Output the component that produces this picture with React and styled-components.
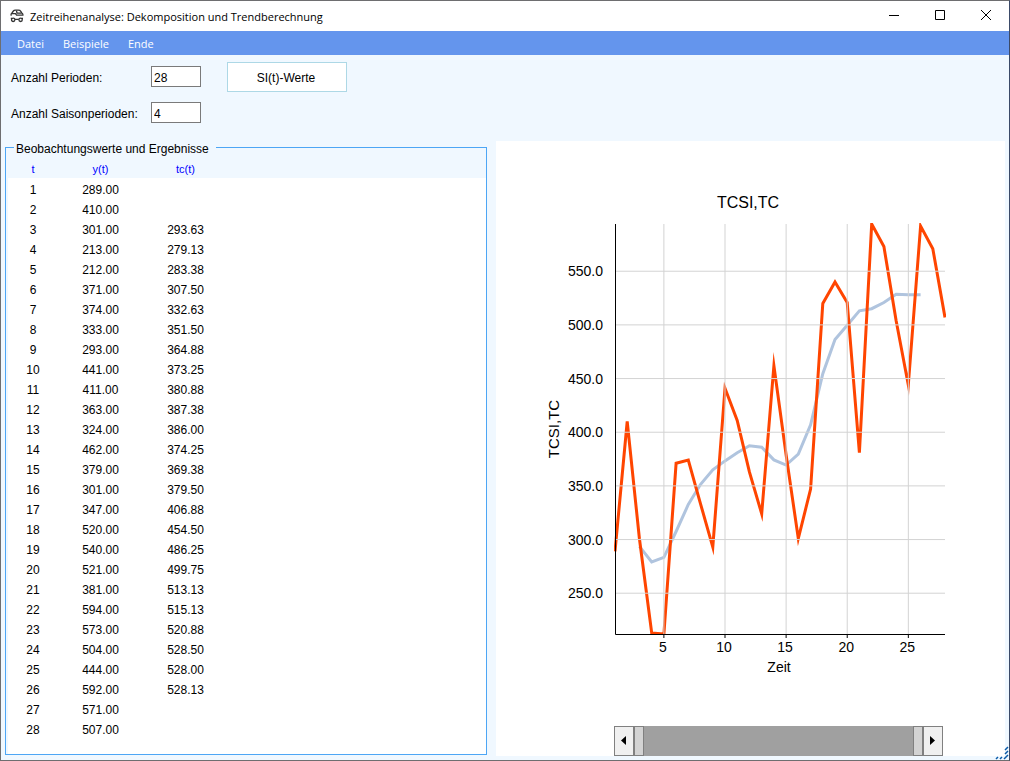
import React, { useState } from "react";
import styled, { createGlobalStyle } from "styled-components";

const observed = [
  289, 410, 301, 213, 212, 371, 374, 333, 293, 441, 411, 363, 324, 462, 379,
  301, 347, 520, 540, 521, 381, 594, 573, 504, 444, 592, 571, 507,
];

// the trend starts at t = 3 and ends at t = 26
const trend = [
  293.63, 279.13, 283.38, 307.5, 332.63, 351.5, 364.88, 373.25, 380.88, 387.38,
  386, 374.25, 369.38, 379.5, 406.88, 454.5, 486.25, 499.75, 513.13, 515.13,
  520.88, 528.5, 528, 528.13,
];

const rows = observed.map((y, i) => ({
  t: i + 1,
  y,
  tc: trend[i - 2],
}));

const plot = { left: 119, right: 449, top: 83, bottom: 493 };
const xPos = (t) => plot.left + ((t - 1) * (plot.right - plot.left)) / 27;
const yPos = (v) =>
  plot.bottom - ((v - 212) * (plot.bottom - plot.top)) / (594 - 212);
const toPoints = (list) =>
  list.map((p) => `${xPos(p.t).toFixed(1)},${yPos(p.v).toFixed(1)}`).join(" ");

const AppIcon = () => (
  <Logo viewBox="0 0 14 14" aria-hidden="true">
    <path d="M1.4 6.6Q0.6 5 1.8 4.2L3.4 2Q4 1.2 5.4 1.2H8.4Q10 1.2 10.8 2.4L12 4.4Q13.4 5 12.6 6.8" />
    <path d="M1.8 4.6H5.4L6.6 6.2H12.4M6.4 1.6L7 4L11 4.2" />
    <circle cx="3.2" cy="10.8" r="1.7" />
    <circle cx="10.6" cy="10.8" r="1.7" />
    <path d="M5 10.4H8.8M0.8 9.4H2M11.8 9.4H13" />
  </Logo>
);

const Chart = () => (
  <Plot viewBox="0 0 509 585" role="img" aria-label="TCSI,TC">
    <clipPath id="plotArea">
      <rect x="118" y="82" width="332" height="412" />
    </clipPath>
    <ChartTitle x="252" y="67">
      TCSI,TC
    </ChartTitle>
    <g clipPath="url(#plotArea)">
      <Line
        color="lightsteelblue"
        points={toPoints(
          rows.filter((r) => r.tc).map((r) => ({ t: r.t, v: r.tc }))
        )}
      />
      <Line
        color="orangered"
        points={toPoints(rows.map((r) => ({ t: r.t, v: r.y })))}
      />
    </g>
    {[250, 300, 350, 400, 450, 500, 550].map((v) => (
      <g key={v}>
        <GridLine x1={plot.left} x2={plot.right} y1={yPos(v)} y2={yPos(v)} />
        <AxisText x="107" y={yPos(v) + 5} anchor="end">
          {v.toFixed(1)}
        </AxisText>
      </g>
    ))}
    {[5, 10, 15, 20, 25].map((t) => (
      <g key={t}>
        <GridLine x1={xPos(t)} x2={xPos(t)} y1={plot.top} y2={plot.bottom} />
        <Axis d={`M${xPos(t)} 493v4`} />
        <AxisText x={xPos(t) - 1} y="511">
          {t}
        </AxisText>
      </g>
    ))}
    <Axis d="M119.5 83V493.5H449" />
    <AxisText x="283" y="531">
      Zeit
    </AxisText>
    <SideText transform="translate(63 288) rotate(-90)">TCSI,TC</SideText>
  </Plot>
);

const App = () => {
  const [periods, setPeriods] = useState("28");
  const [season, setSeason] = useState("4");

  return (
    <Window>
      <GlobalStyle />
      <TitleBar>
        <AppIcon />
        <WindowTitle>
          Zeitreihenanalyse: Dekomposition und Trendberechnung
        </WindowTitle>
        <WindowButton aria-label="Minimieren">
          <Glyph viewBox="0 0 12 12">
            <path d="M1 5.5H11" />
          </Glyph>
        </WindowButton>
        <WindowButton aria-label="Maximieren">
          <Glyph viewBox="0 0 12 12">
            <path d="M1.5 0.5H10.5V9.5H1.5Z" />
          </Glyph>
        </WindowButton>
        <WindowButton aria-label="Schließen">
          <Glyph viewBox="0 0 12 12">
            <path d="M1 0L11 10M11 0L1 10" />
          </Glyph>
        </WindowButton>
      </TitleBar>
      <MenuBar>
        <MenuItem>Datei</MenuItem>
        <MenuItem>Beispiele</MenuItem>
        <MenuItem>Ende</MenuItem>
      </MenuBar>
      <Settings onSubmit={(e) => e.preventDefault()}>
        <Label htmlFor="periods">Anzahl Perioden:</Label>
        <Input
          id="periods"
          value={periods}
          onChange={(e) => setPeriods(e.target.value)}
        />
        <ValuesButton type="submit">SI(t)-Werte</ValuesButton>
        <Label htmlFor="season">Anzahl Saisonperioden:</Label>
        <Input
          id="season"
          value={season}
          onChange={(e) => setSeason(e.target.value)}
        />
      </Settings>
      <Workspace>
        <Group>
          <Legend>Beobachtungswerte und Ergebnisse</Legend>
          <TableArea>
            <Table>
              <colgroup>
                <Col width="50px" />
                <Col width="85px" />
                <Col width="85px" />
                <Col />
              </colgroup>
              <thead>
                <tr>
                  <HeadCell>t</HeadCell>
                  <HeadCell>y(t)</HeadCell>
                  <HeadCell>tc(t)</HeadCell>
                  <HeadCell as="td" />
                </tr>
              </thead>
              <tbody>
                {rows.map((r) => (
                  <tr key={r.t}>
                    <Cell>{r.t}</Cell>
                    <Cell>{r.y.toFixed(2)}</Cell>
                    <Cell>{r.tc ? r.tc.toFixed(2) : ""}</Cell>
                    <Cell />
                  </tr>
                ))}
              </tbody>
            </Table>
          </TableArea>
        </Group>
        <ChartPanel>
          <Chart />
          <ScrollBar>
            <ScrollButton aria-label="Zurück">
              <Arrow viewBox="0 0 5 9">
                <path d="M5 0V9L0 4.5Z" />
              </Arrow>
            </ScrollButton>
            <Handle aria-label="Anfang" />
            <Track />
            <Handle aria-label="Ende des Bereichs" />
            <ScrollButton aria-label="Weiter">
              <Arrow viewBox="0 0 5 9">
                <path d="M0 0V9L5 4.5Z" />
              </Arrow>
            </ScrollButton>
          </ScrollBar>
        </ChartPanel>
      </Workspace>
      <Grip viewBox="0 0 14 14" aria-hidden="true">
        <path d="M1 13L3 11M5 13L7 11M9 13L13 9M10 8L13 5M10 4L13 1" />
      </Grip>
    </Window>
  );
};

const GlobalStyle = createGlobalStyle`
  * {
    box-sizing: border-box;
  }
  body {
    margin: 0;
    font-family: "Liberation Sans", Arial, sans-serif;
    font-size: 12px;
    color: #000;
  }
  button,
  input {
    font: inherit;
    color: inherit;
  }
`;

const Window = styled.div`
  position: relative;
  display: flex;
  flex-direction: column;
  min-height: 100vh;
  background: aliceblue;
  border: 1px solid #6e6e70;
  border-right-color: #3b4a68;
`;

const TitleBar = styled.header`
  display: flex;
  align-items: center;
  height: 30px;
  padding-left: 9px;
  background: #fff;
`;

const Logo = styled.svg`
  width: 14px;
  height: 14px;
  fill: none;
  stroke: #333;
  stroke-width: 1.3;
`;

const WindowTitle = styled.h1`
  flex: 1;
  margin: 0;
  padding-left: 6px;
  font-family: "Open Sans", "Noto Sans", sans-serif;
  font-size: 11px;
  font-weight: 400;
`;

const WindowButton = styled.button`
  display: flex;
  align-items: center;
  justify-content: center;
  width: 46px;
  height: 30px;
  padding: 0;
  border: 0;
  background: transparent;
  &:hover {
    background: #e5e5e5;
  }
`;

const Glyph = styled.svg`
  width: 12px;
  height: 12px;
  fill: none;
  stroke: #000;
`;

const MenuBar = styled.nav`
  display: flex;
  height: 24px;
  padding-left: 6px;
  background: cornflowerblue;
`;

const MenuItem = styled.button`
  padding: 0 9px 0 10px;
  border: 0;
  background: transparent;
  color: #fff;
  font-family: "Open Sans", "Noto Sans", sans-serif;
  font-size: 11px;
`;

const Settings = styled.form`
  display: grid;
  grid-template-columns: 140px 50px 120px;
  grid-template-rows: 30px 30px;
  row-gap: 6px;
  align-items: center;
  padding: 7px 10px 11px;
`;

const Label = styled.label`
  padding-top: 2px;
  white-space: nowrap;
`;

const Input = styled.input`
  width: 50px;
  height: 21px;
  margin-bottom: 1px;
  padding: 2px 2px 0;
  border: 1px solid #7a7a7a;
  background: #fff;
`;

const ValuesButton = styled.button`
  width: 120px;
  height: 30px;
  margin-left: 26px;
  padding: 2px 2px 0 0;
  border: 1px solid lightblue;
  background: #fff;
`;

const Workspace = styled.main`
  display: grid;
  grid-template-columns: minmax(0, 482fr) minmax(0, 509fr);
  column-gap: 9px;
  flex: 1;
  padding: 0 4px 4px;
`;

const Group = styled.fieldset`
  display: flex;
  flex-direction: column;
  min-width: 0;
  margin: 0 0 1px;
  padding: 0 0 0 2px;
  border: 1px solid #4da6f5;
`;

const Legend = styled.legend`
  height: 17px;
  margin-left: 6px;
  padding: 4px 7px 0 2px;
  line-height: 13px;
`;

const TableArea = styled.div`
  flex: 1;
  background: #fff;
`;

const Table = styled.table`
  width: 100%;
  table-layout: fixed;
  border-collapse: collapse;
`;

const Col = styled.col`
  width: ${(props) => props.width || "auto"};
`;

const HeadCell = styled.th`
  height: 22px;
  padding: 5px 0 0;
  background: aliceblue;
  color: blue;
  font-size: 11px;
  font-weight: 400;
  line-height: 17px;
  text-align: center;
`;

const Cell = styled.td`
  height: 20px;
  padding: 4px 0 0;
  line-height: 16px;
  text-align: center;
`;

const ChartPanel = styled.section`
  display: flex;
  flex-direction: column;
  justify-content: space-between;
  margin-top: 2px;
  background: #fff;
`;

const Plot = styled.svg`
  display: block;
  width: 100%;
`;

const Line = styled.polyline`
  fill: none;
  stroke: ${(props) => props.color};
  stroke-width: 3;
  stroke-miterlimit: 10;
`;

const GridLine = styled.line`
  stroke: lightgray;
`;

const Axis = styled.path`
  fill: none;
  stroke: #000;
`;

const AxisText = styled.text`
  font-size: 14px;
  text-anchor: ${(props) => props.anchor || "middle"};
`;

const ChartTitle = styled.text`
  font-size: 16px;
  text-anchor: middle;
`;

const SideText = styled.text`
  font-size: 15px;
  text-anchor: middle;
`;

const ScrollBar = styled.div`
  display: flex;
  height: 30px;
  margin: 0 62px 0 118px;
`;

const ScrollButton = styled.button`
  display: flex;
  align-items: center;
  justify-content: center;
  width: 20px;
  padding: 0 2px 2px 0;
  border: 1px solid #808080;
  background: #f0f0f0;
`;

const Arrow = styled.svg`
  width: 5px;
  height: 9px;
`;

const Handle = styled.button`
  width: 10px;
  padding: 0;
  border: 1px solid #808080;
  background: lightgray;
`;

const Track = styled.div`
  flex: 1;
  background: #a0a0a0;
`;

const Grip = styled.svg`
  position: absolute;
  right: 0;
  bottom: 0;
  width: 14px;
  height: 14px;
  fill: none;
  stroke: #0a5aa8;
  stroke-width: 1.5;
`;

export default App;
